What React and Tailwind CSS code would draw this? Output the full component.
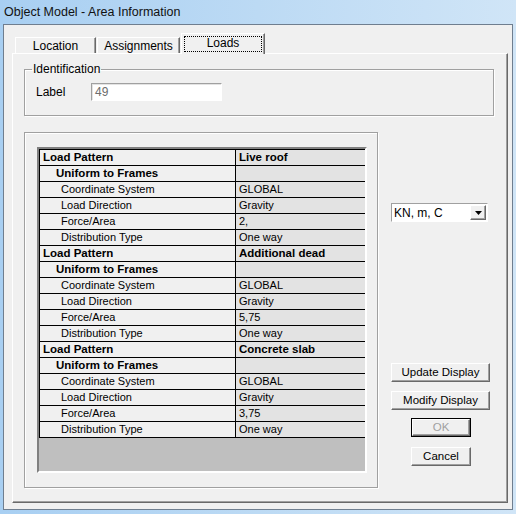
import React from 'react';

const rows = [
  { kind: 'pattern', label: 'Load Pattern', value: 'Live roof' },
  { kind: 'group', label: 'Uniform to Frames', value: '' },
  { kind: 'item', label: 'Coordinate System', value: 'GLOBAL' },
  { kind: 'item', label: 'Load Direction', value: 'Gravity' },
  { kind: 'item', label: 'Force/Area', value: '2,' },
  { kind: 'item', label: 'Distribution Type', value: 'One way' },
  { kind: 'pattern', label: 'Load Pattern', value: 'Additional dead' },
  { kind: 'group', label: 'Uniform to Frames', value: '' },
  { kind: 'item', label: 'Coordinate System', value: 'GLOBAL' },
  { kind: 'item', label: 'Load Direction', value: 'Gravity' },
  { kind: 'item', label: 'Force/Area', value: '5,75' },
  { kind: 'item', label: 'Distribution Type', value: 'One way' },
  { kind: 'pattern', label: 'Load Pattern', value: 'Concrete slab' },
  { kind: 'group', label: 'Uniform to Frames', value: '' },
  { kind: 'item', label: 'Coordinate System', value: 'GLOBAL' },
  { kind: 'item', label: 'Load Direction', value: 'Gravity' },
  { kind: 'item', label: 'Force/Area', value: '3,75' },
  { kind: 'item', label: 'Distribution Type', value: 'One way' },
];

// raised 3d edge, classic windows look
const raised =
  'border border-t-white border-l-white border-b-[#696969] border-r-[#696969] shadow-[inset_-1px_-1px_0_#a0a0a0]';
const etched = 'border border-[#a0a0a0] shadow-[inset_1px_1px_0_#fff,1px_1px_0_#fff]';

function Tab({ label, selected, width }) {
  if (selected) {
    return (
      <div
        className={`relative z-10 -mb-px h-[21px] ${width} bg-[#f0f0f0] border-t border-l border-r border-t-white border-l-white border-r-[#696969] shadow-[inset_-1px_0_0_#a0a0a0] flex items-center justify-center p-[2px]`}
      >
        <div className="w-full h-full border border-dotted border-black flex items-center justify-center text-[12px] leading-none text-black pb-[2px]">
          {label}
        </div>
      </div>
    );
  }
  return (
    <div
      className={`h-[16px] ${width} bg-[#f0f0f0] border-t border-l border-r border-t-white border-l-white border-r-[#696969] shadow-[inset_-1px_0_0_#a0a0a0] flex items-center justify-center text-[12px] leading-none text-black pt-px`}
    >
      {label}
    </div>
  );
}

function Row({ row }) {
  const left =
    row.kind === 'pattern'
      ? 'pl-[3px] font-bold text-[11.5px]'
      : row.kind === 'group'
      ? 'pl-[16px] font-bold text-[11.5px]'
      : 'pl-[21px] text-[11px]';
  return (
    <div className="flex h-[16px] border-b border-black">
      <div className={`w-[196px] border-r border-black flex items-center bg-[#f0f0f0] ${left}`}>{row.label}</div>
      <div
        className={`flex-1 flex items-center pl-[3px] bg-[#e3e3e3] ${
          row.kind === 'pattern' ? 'font-bold text-[11.5px]' : 'text-[11px]'
        }`}
      >
        {row.value}
      </div>
    </div>
  );
}

function Button({ children, disabled, className = '' }) {
  if (disabled) {
    return (
      <div className={`border border-black ${className}`}>
        <div className={`${raised} h-full flex items-center justify-center text-[11.5px] text-[#a0a0a0]`}>
          {children}
        </div>
      </div>
    );
  }
  return (
    <div className={`${raised} flex items-center justify-center text-[11.5px] text-black ${className}`}>
      {children}
    </div>
  );
}

export default function App() {
  return (
    <div className="w-[516px] h-[514px] overflow-hidden bg-gradient-to-r from-[#a8cff2] via-[#bcdaf4] to-[#d0e5f7] font-['Liberation_Sans',Arial,sans-serif] text-black flex flex-col">
      {/* Title bar */}
      <div className="h-[24px] pl-[4px] flex items-center text-[12.5px] text-[#111]">Object Model - Area Information</div>

      {/* Client area */}
      <div className="mx-[3px] h-[486px] border border-[#6f7e8f] bg-[#f0f0f0] pt-[8px] pl-[8px]">
        {/* Tabs */}
        <div className="flex items-end pl-[3px] gap-[1px]">
          <Tab label="Location" width="w-[81px]" />
          <Tab label="Assignments" width="w-[83px]" />
          <Tab label="Loads" width="w-[84px]" selected />
        </div>

        {/* Tab panel */}
        <div className="w-[496px] h-[450px] border border-t-white border-l-white border-b-[#696969] border-r-[#696969] shadow-[inset_-1px_-1px_0_#a0a0a0] pl-[11px] pt-[9px]">
          <fieldset className={`w-[470px] h-[53px] ${etched}`}>
            <legend className="ml-[7px] px-[1px] text-[12px] leading-none">Identification</legend>
            <div className="flex items-center mt-[8px] pl-[11px]">
              <span className="text-[12px] w-[55px]">Label</span>
              <div className="w-[131px] h-[18px] bg-white border border-t-[#a0a0a0] border-l-[#a0a0a0] border-b-white border-r-white shadow-[inset_1px_1px_0_#e3e3e3] flex items-center pl-[3px] text-[12px] text-[#6d6d6d]">
                49
              </div>
            </div>
          </fieldset>

          <div className="flex mt-[16px]">
            {/* Load table group */}
            <div className={`w-[354px] h-[356px] ${etched} pt-[14px] pl-[12px]`}>
              <div className="w-[330px] border-2 border-t-[#808080] border-l-[#808080] border-b-white border-r-white shadow-[inset_1px_1px_0_#000]">
                <div className="pt-px pl-px">
                  {rows.map((r, i) => (
                    <Row key={i} row={r} />
                  ))}
                </div>
                <div className="h-[33px] bg-[#bfbfbf]" />
              </div>
            </div>

            {/* Right side */}
            <div className="ml-[13px] w-[99px] flex flex-col pt-[71px]">
              <div className="w-[97px] h-[19px] bg-white border border-t-[#a0a0a0] border-l-[#a0a0a0] border-b-white border-r-white flex items-center">
                <span className="flex-1 pl-[2px] text-[12px]">KN, m, C</span>
                <div className={`${raised} w-[16px] h-[15px] mr-px flex items-center justify-center bg-[#f0f0f0]`}>
                  <svg width="7" height="4" viewBox="0 0 7 4">
                    <path d="M0 0h7L3.5 4z" fill="#000" />
                  </svg>
                </div>
              </div>

              <Button className="mt-[141px] w-[99px] h-[19px]">Update Display</Button>
              <Button className="mt-[9px] w-[99px] h-[19px]">Modify Display</Button>
              <Button disabled className="mt-[8px] ml-[20px] w-[60px] h-[19px]">OK</Button>
              <Button className="mt-[10px] ml-[20px] w-[60px] h-[19px]">Cancel</Button>
            </div>
          </div>
        </div>
      </div>
    </div>
  );
}
